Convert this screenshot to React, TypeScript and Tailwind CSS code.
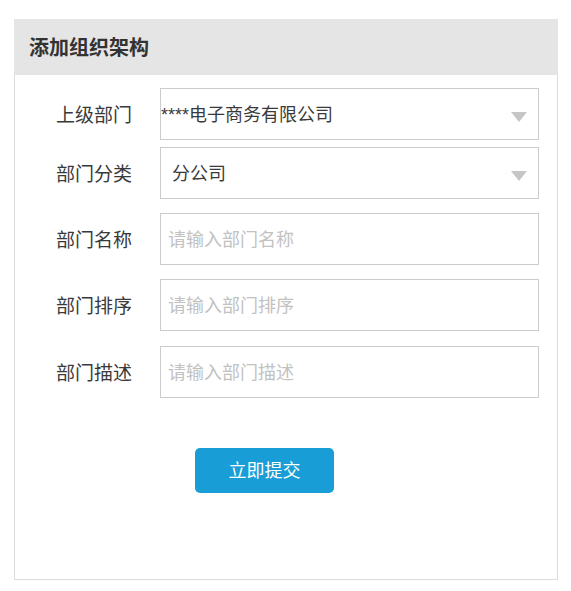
import * as React from 'react';

const font = { fontFamily: '"Liberation Sans", "Noto Sans CJK SC", sans-serif' };

function Caret() {
  return (
    <span className="absolute right-[11px] top-[23px] h-0 w-0 border-x-[8px] border-t-[10px] border-x-transparent border-t-[#c6c6c6]" />
  );
}

function Row({ label, className, children }: { label: string; className?: string; children: React.ReactNode }) {
  return (
    <div className={'flex items-center ' + (className ?? '')}>
      <div className="w-[117px] shrink-0 pt-[3px] text-right text-[19px] leading-none text-[#3a3a3a]">{label}</div>
      <div className="ml-[28px] w-[379px]">{children}</div>
    </div>
  );
}

export default function App() {
  return (
    <div className="min-h-[591px] bg-white pl-[14px] pt-[19px]" style={font}>
      <div className="flex h-[561px] w-[544px] flex-col border border-t-0 border-[#dcdcdc]">
        <div className="-mx-px flex h-[56px] items-center bg-[#e5e5e5] pl-[15px] pt-[2px]">
          <h2 className="text-[20px] font-bold text-[#333]">添加组织架构</h2>
        </div>

        <div className="flex flex-col pt-[13px]">
          <Row label="上级部门">
            <div className="relative flex h-[52px] items-center border border-[#cccccc] pl-0 pt-[2px] text-[18px] text-[#3a3a3a]">
              ****电子商务有限公司
              <Caret />
            </div>
          </Row>
          <Row label="部门分类" className="mt-[7px]">
            <div className="relative flex h-[52px] items-center border border-[#cccccc] pl-[11px] pt-[2px] text-[18px] text-[#3a3a3a]">
              分公司
              <Caret />
            </div>
          </Row>
          <Row label="部门名称" className="mt-[14px]">
            <input
              className="h-[52px] w-full border border-[#cccccc] pl-[7px] pt-[2px] text-[18px] text-[#333] outline-none placeholder:text-[#c2c2c2]"
              placeholder="请输入部门名称"
            />
          </Row>
          <Row label="部门排序" className="mt-[14px]">
            <input
              className="h-[52px] w-full border border-[#cccccc] pl-[7px] pt-[2px] text-[18px] text-[#333] outline-none placeholder:text-[#c2c2c2]"
              placeholder="请输入部门排序"
            />
          </Row>
          <Row label="部门描述" className="mt-[15px]">
            <input
              className="h-[52px] w-full border border-[#cccccc] pl-[7px] pt-[2px] text-[18px] text-[#333] outline-none placeholder:text-[#c2c2c2]"
              placeholder="请输入部门描述"
            />
          </Row>

          <div className="mt-[50px] pl-[180px]">
            <button className="h-[45px] w-[139px] rounded-[5px] bg-[#199dd6] pt-[2px] text-[18px] text-white">立即提交</button>
          </div>
        </div>
      </div>
    </div>
  );
}
